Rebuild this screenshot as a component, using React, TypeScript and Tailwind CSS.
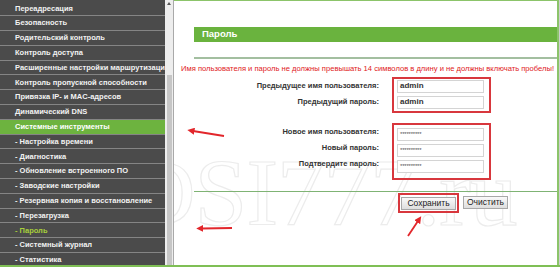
const MENU = [
  { label: 'Переадресация' },
  { label: 'Безопасность' },
  { label: 'Родительский контроль' },
  { label: 'Контроль доступа' },
  { label: 'Расширенные настройки маршрутизации' },
  { label: 'Контроль пропускной способности' },
  { label: 'Привязка IP- и MAC-адресов' },
  { label: 'Динамический DNS' },
  { label: 'Системные инструменты', active: true },
  { label: '- Настройка времени' },
  { label: '- Диагностика' },
  { label: '- Обновление встроенного ПО' },
  { label: '- Заводские настройки' },
  { label: '- Резервная копия и восстановление' },
  { label: '- Перезагрузка' },
  { label: '- Пароль', current: true },
  { label: '- Системный журнал' },
  { label: '- Статистика' },
]

const font = "font-['Liberation_Sans',Arial,sans-serif]"

function Field({ value, masked }: { value: string; masked?: boolean }) {
  return (
    <div className="h-[13px] w-[87px] border border-[#d4d4d4] bg-white pl-[2px] flex items-center">
      {masked ? (
        <span className="text-[6px] leading-none text-[#555] tracking-[-0.2px]">{value}</span>
      ) : (
        <span className="text-[8px] font-bold leading-none text-[#333]">{value}</span>
      )}
    </div>
  )
}

function Labels({ items }: { items: string[] }) {
  return (
    <div className="w-[205px] pt-[3px] flex flex-col gap-[3px] items-end">
      {items.map((t) => (
        <div key={t} className="h-[13px] flex items-center text-[7.5px] font-bold text-[#333] whitespace-nowrap">
          {t}
        </div>
      ))}
    </div>
  )
}

export default function App() {
  return (
    <div className={`w-[560px] h-[267px] relative overflow-hidden bg-white flex flex-col ${font}`}>
      <div className="flex h-[265px]">
        <div className="w-[165px] bg-[#4b4b4b] pt-[1.5px] overflow-hidden">
          {MENU.map((m) => (
            <div
              key={m.label}
              className={`h-[14.8px] border-b border-[#858585] pl-[15px] flex items-center whitespace-nowrap text-[7.5px] font-bold leading-none ${
                m.active ? 'bg-[#6db33f] text-white' : m.current ? 'text-[#a8cf3b]' : 'text-[#f2f2f2]'
              }`}
            >
              {m.label}
            </div>
          ))}
        </div>

        <div className="w-[9px] bg-[#ededed] border-r border-[#a9a9a9] flex flex-col items-center">
          <div className="h-[8px] pt-[2px] flex items-start justify-center">
            <div className="w-0 h-0 border-l-[2.5px] border-r-[2.5px] border-b-[3px] border-l-transparent border-r-transparent border-b-[#555]" />
          </div>
          <div className="h-[67px]" />
          <div className="flex-1 w-[5px] bg-[#c6c6c6]" />
        </div>

        <div className="relative flex-1 border-t border-r-2 border-[#8cc46a] overflow-hidden">
          <span className="absolute left-[-47px] top-[145px] text-[95px] leading-none font-['Liberation_Serif',serif] text-transparent [-webkit-text-stroke:1.2px_#ececec] whitespace-nowrap tracking-[-1px]">
            DSI777.ru
          </span>

          <div className="relative flex flex-col">
            <div className="ml-[20px] mt-[26px] h-[15px] bg-[#6ab33e] pl-[8px] flex items-center text-[9.5px] font-bold text-white">
              Пароль
            </div>
            <div className="ml-[20px] mt-[15px] h-[1.5px] bg-[#a3bfa0]" />
            <div className="pl-[7px] mt-[5px] text-[7.6px] leading-[10px] text-[#e0201b] whitespace-nowrap">
              Имя пользователя и пароль не должны превышать 14 символов в длину и не должны включать пробелы!
            </div>

            <div className="flex mt-[3px]">
              <Labels items={['Предыдущее имя пользователя:', 'Предыдущий пароль:']} />
              <div className="ml-[13px] border-2 border-[#d8373d] pt-[1px] pl-[3px] pr-[5px] pb-[2px] flex flex-col gap-[3px]">
                <Field value="admin" />
                <Field value="admin" />
              </div>
            </div>

            <div className="flex mt-[10px]">
              <Labels items={['Новое имя пользователя:', 'Новый пароль:', 'Подтвердите пароль:']} />
              <div className="ml-[13px] border-2 border-[#d8373d] pt-[3px] pl-[3px] pr-[5px] pb-[5px] flex flex-col gap-[3px]">
                <Field value="**********" masked />
                <Field value="**********" masked />
                <Field value="**********" masked />
              </div>
            </div>

            <div className="ml-[20px] mt-[11px] h-[1.5px] bg-[#7fb374]" />

            <div className="flex items-center ml-[224px] mt-[0.5px]">
              <div className="border-2 border-[#d8373d] px-[1px] pt-[2px] pb-[1px]">
                <div className="h-[13px] w-[55px] border border-[#a8a8a8] bg-gradient-to-b from-[#fafafa] to-[#dedede] flex items-center justify-center text-[8.5px] text-[#222]">
                  Сохранить
                </div>
              </div>
              <div className="ml-[4px] h-[13px] w-[45px] border border-[#a8a8a8] bg-gradient-to-b from-[#fafafa] to-[#dedede] flex items-center justify-center text-[8.5px] text-[#222]">
                Очистить
              </div>
            </div>
          </div>
        </div>
        <div className="w-[1px] bg-[#cfcfcf]" />
      </div>
      <div className="h-[2px] bg-[#7fbf55]" />

      <svg className="absolute inset-0 pointer-events-none" width="560" height="267" viewBox="0 0 560 267">
        <defs>
          <marker id="ah" viewBox="0 0 10 10" refX="2" refY="5" markerWidth="4" markerHeight="4" orient="auto">
            <path d="M0 0 L10 5 L0 10 z" fill="#e2262b" />
          </marker>
        </defs>
        <line x1="224" y1="136" x2="193" y2="131" stroke="#e2262b" strokeWidth="1.8" markerEnd="url(#ah)" />
        <line x1="232" y1="228" x2="202" y2="228.5" stroke="#e2262b" strokeWidth="1.8" markerEnd="url(#ah)" />
        <line x1="408" y1="236" x2="418" y2="221" stroke="#e2262b" strokeWidth="1.8" markerEnd="url(#ah)" />
      </svg>
    </div>
  )
}
